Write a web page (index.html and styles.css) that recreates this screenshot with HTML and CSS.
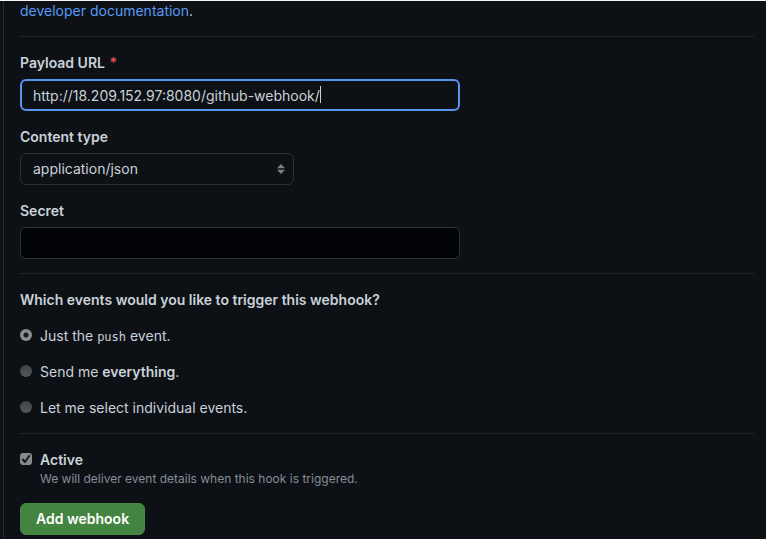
FILE: index.html
```html
<!DOCTYPE html>
<html lang="en">
<head>
<meta charset="utf-8">
<title>Add webhook</title>
<link rel="stylesheet" href="styles.css">
</head>
<body>
<main class="panel">
  <p class="intro"><a href="#docs">developer documentation</a>.</p>
  <form class="form">
    <section class="section">
      <div class="field">
        <label class="label" for="url">Payload URL <span class="required">*</span></label>
        <div class="input-wrap">
          <input class="control control-focus" id="url" type="text" value="http://18.209.152.97:8080/github-webhook/">
          <span class="caret"></span>
        </div>
      </div>
      <div class="field">
        <label class="label" for="type">Content type</label>
        <div class="select-wrap">
          <select class="control" id="type"><option>application/json</option></select>
          <svg class="arrows" viewBox="0 0 8 10" width="8" height="10" aria-hidden="true"><path d="M4 0 8 4.3H0zM4 10 0 5.7h8z"/></svg>
        </div>
      </div>
      <div class="field">
        <label class="label" for="secret">Secret</label>
        <input class="control control-secret" id="secret" type="text">
      </div>
    </section>
    <fieldset class="section events">
      <legend class="label">Which events would you like to trigger this webhook?</legend>
      <div class="choice"><input class="radio" type="radio" name="events" id="push" checked><label for="push">Just the <code>push</code> event.</label></div>
      <div class="choice"><input class="radio" type="radio" name="events" id="all"><label for="all">Send me <strong>everything</strong>.</label></div>
      <div class="choice"><input class="radio" type="radio" name="events" id="select"><label for="select">Let me select individual events.</label></div>
    </fieldset>
    <section class="section">
      <div class="choice">
        <span class="check-wrap">
          <input class="check" type="checkbox" id="active" checked>
          <svg class="tick" viewBox="0 0 12 12" width="12" height="12" aria-hidden="true"><path d="M2.8 6.5 5 9 9.2 3"/></svg>
        </span>
        <label class="label" for="active">Active</label>
      </div>
      <p class="help">We will deliver event details when this hook is triggered.</p>
      <button class="submit" type="submit">Add webhook</button>
    </section>
  </form>
</main>
</body>
</html>
```

FILE: styles.css
```css
* {
  box-sizing: border-box;
}

body {
  margin: 0;
  background: #0d1116;
  color: #c9d1d9;
  font: 14px/20px Inter, "Liberation Sans", sans-serif;
  border-top: 1px solid #f4f6f5;
}

.panel {
  margin-left: 3px;
  padding: 0 12px 3px 16px;
  border-left: 1px solid #272c32;
}

.intro {
  margin: 0 0 15px;
}

a {
  color: #589af5;
  text-decoration: none;
}

.section {
  margin: 0;
  padding: 16px 0 14px;
  border: 0;
  border-top: 1px solid #20252b;
}

.section:last-child {
  padding-bottom: 0;
}

.field + .field {
  margin-top: 16px;
}

.label {
  font-weight: 600;
}

.field .label {
  display: block;
  margin-bottom: 6px;
}

.required {
  margin-left: 1px;
  color: #e5534b;
}

.input-wrap,
.select-wrap {
  position: relative;
  max-width: 440px;
}

.select-wrap {
  max-width: 274px;
}

.control {
  display: block;
  width: 100%;
  max-width: 440px;
  height: 32px;
  padding: 0 12px;
  border: 1px solid #2b3036;
  border-radius: 6px;
  outline: 0;
  appearance: none;
  background: #0d1116;
  color: inherit;
  font: inherit;
}

.control-focus {
  padding: 0 11px;
  border: 2px solid #5793ea;
}

.control-secret {
  background: #010206;
}

.caret {
  position: absolute;
  top: 7px;
  left: 300px;
  width: 1px;
  height: 17px;
  background: #c9d1d9;
}

.arrows {
  position: absolute;
  top: 11px;
  right: 9px;
  fill: #7b8087;
  pointer-events: none;
}

.events {
  padding-bottom: 15px;
}

.events legend {
  padding: 0;
  float: left;
  width: 100%;
  margin-bottom: 16px;
}

.events .choice {
  clear: both;
}

.choice {
  display: flex;
  align-items: flex-start;
  gap: 8px;
}

.choice + .choice {
  margin-top: 16px;
}

code {
  font: 12px/16px "DejaVu Sans Mono", monospace;
}

strong {
  font-weight: 600;
}

.radio,
.check {
  appearance: none;
  flex: none;
  display: block;
  width: 12px;
  height: 12px;
  margin: 3px 0 0;
  border-radius: 50%;
  background: linear-gradient(#3f4144, #55575a);
}

.radio:checked {
  background: radial-gradient(circle, #17191c 2px, #8d8e91 3px);
}

.check {
  margin: 0;
  border-radius: 3px;
  background: #88898c;
}

.check-wrap {
  position: relative;
  margin-top: 3px;
}

.tick {
  position: absolute;
  top: 0;
  left: 0;
  fill: none;
  stroke: #15181c;
  stroke-width: 2;
  stroke-linecap: round;
  stroke-linejoin: round;
  pointer-events: none;
}

.help {
  margin: 0 0 15px 20px;
  color: #858d97;
  font-size: 12px;
  line-height: 18px;
}

.submit {
  display: block;
  height: 32px;
  padding: 0 15px;
  border: 1px solid #468743;
  border-radius: 6px;
  background: #438440;
  color: #fff;
  font: inherit;
  font-weight: 600;
}
```
